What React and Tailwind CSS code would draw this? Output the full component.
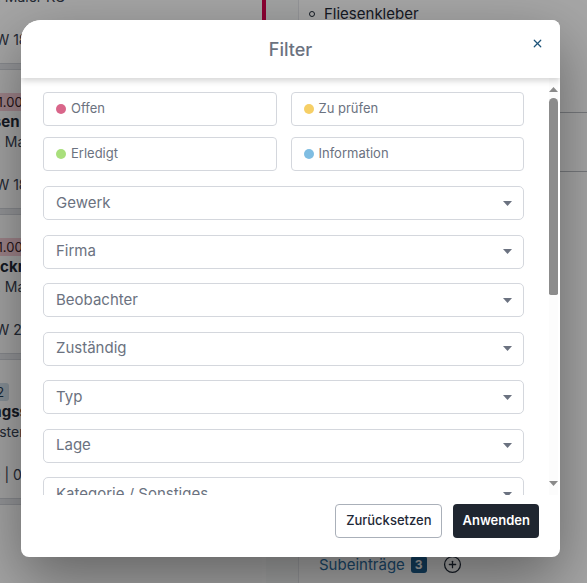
import React from 'react';
import { X, CirclePlus } from 'lucide-react';

const statuses = [
  { name: 'Offen', dot: 'bg-[#d9668a]' },
  { name: 'Zu prüfen', dot: 'bg-[#f6cf66]' },
  { name: 'Erledigt', dot: 'bg-[#a9df7c]' },
  { name: 'Information', dot: 'bg-[#7fbde2]' },
];

const fields = [
  'Gewerk',
  'Firma',
  'Beobachter',
  'Zuständig',
  'Typ',
  'Lage',
  'Kategorie / Sonstiges',
  'Bauteil',
];

const cards = [
  {
    badge: 'A1.001',
    badgeCls: 'bg-[#f5cbd5] text-[#3b1f27] -ml-[16px]',
    title: 'Streichen',
    titleCls: '-ml-[47px]',
    sub: 'Fa. Maler KG',
    subCls: '-ml-[19px]',
    date: 'KW 18',
    dateCls: '-ml-[14px]',
  },
  {
    badge: 'A1.001',
    badgeCls: 'bg-[#f5cbd5] text-[#3b1f27] -ml-[16px]',
    title: 'Fliesen verlegen',
    titleCls: '-ml-[33px]',
    sub: 'Fa. Maler KG',
    subCls: '-ml-[19px]',
    date: 'KW 18',
    dateCls: '-ml-[14px]',
  },
  {
    badge: 'A1.001',
    badgeCls: 'bg-[#f5cbd5] text-[#3b1f27] -ml-[16px]',
    title: 'Trocknung',
    titleCls: '-ml-[24px]',
    sub: 'Fa. Maler KG',
    subCls: '-ml-[19px]',
    date: 'KW 22',
    dateCls: '-ml-[14px]',
  },
  {
    badge: '12',
    badgeCls: 'bg-[#cfdde9] text-[#1f3b52] -ml-[14px]',
    title: 'Leitungssicherung',
    titleCls: '-ml-[44px]',
    sub: 'Fenster GmbH',
    subCls: '-ml-[25px]',
    date: 'KW 19 | 02.05.',
    dateCls: '-ml-[41px]',
  },
];

const ListCard = ({ card }) => (
  <div className="h-[145px] flex flex-col">
    <div className="flex-1 flex flex-col pt-[23px] overflow-hidden">
      <div className="h-[18px] flex">
        <span className={`px-[5px] rounded-[3px] text-[13px] leading-[18px] ${card.badgeCls}`}>{card.badge}</span>
      </div>
      <p className={`mt-[1px] text-[15px] leading-[20px] font-bold text-[#1f2937] whitespace-nowrap ${card.titleCls}`}>{card.title}</p>
      <p className={`text-[14px] leading-[19px] text-[#374151] whitespace-nowrap ${card.subCls}`}>{card.sub}</p>
      <p className={`mt-[24px] text-[14px] leading-[19px] text-[#374151] whitespace-nowrap ${card.dateCls}`}>{card.date}</p>
    </div>
    <div className="h-[7px] bg-[#e5e7eb] border-y border-[#d1d5db]" />
  </div>
);

const Caret = () => (
  <svg width="9" height="5" viewBox="0 0 9 5" className="shrink-0">
    <path d="M0 0 H9 L4.5 5 Z" fill="#6b7280" />
  </svg>
);

const Scrollbar = () => (
  <div className="w-[9px] shrink-0 flex flex-col items-center pt-[9px] pb-[9px] bg-[#fcfcfc]">
    <svg width="9" height="5" viewBox="0 0 9 5">
      <path d="M0 5 H9 L4.5 0 Z" fill="#8a8a8a" />
    </svg>
    <div className="mt-[6px] w-[9px] h-[197px] rounded-t-[5px] rounded-b-[2px] bg-[#8c8c8c]" />
    <div className="flex-1" />
    <svg width="9" height="5" viewBox="0 0 9 5">
      <path d="M0 0 H9 L4.5 5 Z" fill="#8a8a8a" />
    </svg>
  </div>
);

const FilterModal = () => (
  <div className="ml-[21px] mt-[20px] w-[539px] h-[537px] bg-white rounded-tl-[20px] rounded-tr-[8px] rounded-b-[8px] shadow-[0_22px_60px_rgba(0,0,0,0.4)] flex flex-col overflow-hidden">
    <div className="relative z-10 h-[58px] shrink-0 flex items-center justify-center bg-white shadow-[0_3px_6px_rgba(0,0,0,0.16)]">
      <h2 className="text-[18px] font-medium text-[#6b7280]">Filter</h2>
      <button className="absolute right-[16px] top-[17px] text-[#1d5479]">
        <X className="w-[13px] h-[13px]" strokeWidth={2.2} />
      </button>
    </div>

    <div className="flex-1 min-h-0 flex pr-[2px]">
      <div className="flex-1 min-w-0 overflow-hidden pl-[22px] pr-[25px] pt-[14px]">
        <div className="grid grid-cols-2 gap-x-[14px] gap-y-[11px]">
          {statuses.map((s) => (
            <button
              key={s.name}
              className="h-[34px] flex items-center gap-[5px] pl-[12px] border border-[#d4d7dd] rounded-[4px] text-[13px] text-[#6b7280]"
            >
              <span className={`w-[10px] h-[10px] rounded-full ${s.dot}`} />
              {s.name}
            </button>
          ))}
        </div>

        <div className="mt-[15px] flex flex-col gap-[14.5px]">
          {fields.map((f) => (
            <div
              key={f}
              className="h-[34px] shrink-0 flex items-center justify-between pl-[12px] pr-[11px] border border-[#d4d7dd] rounded-[5px] text-[15px] text-[#6b7280]"
            >
              <span>{f}</span>
              <Caret />
            </div>
          ))}
        </div>
      </div>
      <Scrollbar />
    </div>

    <div className="h-[62px] shrink-0 flex justify-end items-start gap-[11px] pt-[9px] pr-[21px]">
      <button className="h-[34px] px-[10px] border border-[#aab0b9] rounded-[4px] text-[13px] font-medium text-[#1f2937] bg-white">
        Zurücksetzen
      </button>
      <button className="h-[34px] px-[9px] rounded-[4px] text-[13px] font-semibold text-white bg-[#1f2630]">
        Anwenden
      </button>
    </div>
  </div>
);

export default function App() {
  return (
    <div className="relative w-full h-[583px] overflow-hidden bg-white flex font-['Inter',sans-serif]">
      {/* list on the left, scrolled */}
      <div className="w-[262px] shrink-0 overflow-hidden bg-[#fdfdfd]">
        <div className="-mt-[75px]">
          {cards.map((c, i) => (
            <ListCard key={i} card={c} />
          ))}
        </div>
      </div>
      <div className="w-[4px] shrink-0 flex flex-col">
        <div className="h-[70px] bg-[#d6004e]" />
      </div>
      <div className="w-[32px] shrink-0 bg-[#f9fafb]" />

      {/* detail panel */}
      <div className="flex-1 flex flex-col bg-white border-l border-[#e5e7eb]">
        <ul className="pt-[4px] pl-[10px]">
          <li className="flex items-center gap-[9px] text-[15px] leading-[20px] text-[#1f2937]">
            <span className="w-[6px] h-[6px] rounded-full border border-[#1f2937]" />
            Fliesenkleber
          </li>
        </ul>
        <div className="mt-[88px] h-[59px] border-t border-[#b8bcc2]" />
        <div className="border-t border-[#b8bcc2]" />
        <div className="mt-auto mb-[7px] pl-[20px] flex items-center gap-[6px] text-[15px] text-[#2b6ea3]">
          Subeinträge
          <span className="px-[4px] rounded-[3px] bg-[#1d5f8f] text-white text-[12px] font-bold leading-[17px]">3</span>
          <CirclePlus className="ml-[10px] w-[19px] h-[19px] text-[#1f2937]" strokeWidth={1.6} />
        </div>
      </div>

      <div className="absolute inset-0 bg-black/35">
        <FilterModal />
      </div>
    </div>
  );
}
